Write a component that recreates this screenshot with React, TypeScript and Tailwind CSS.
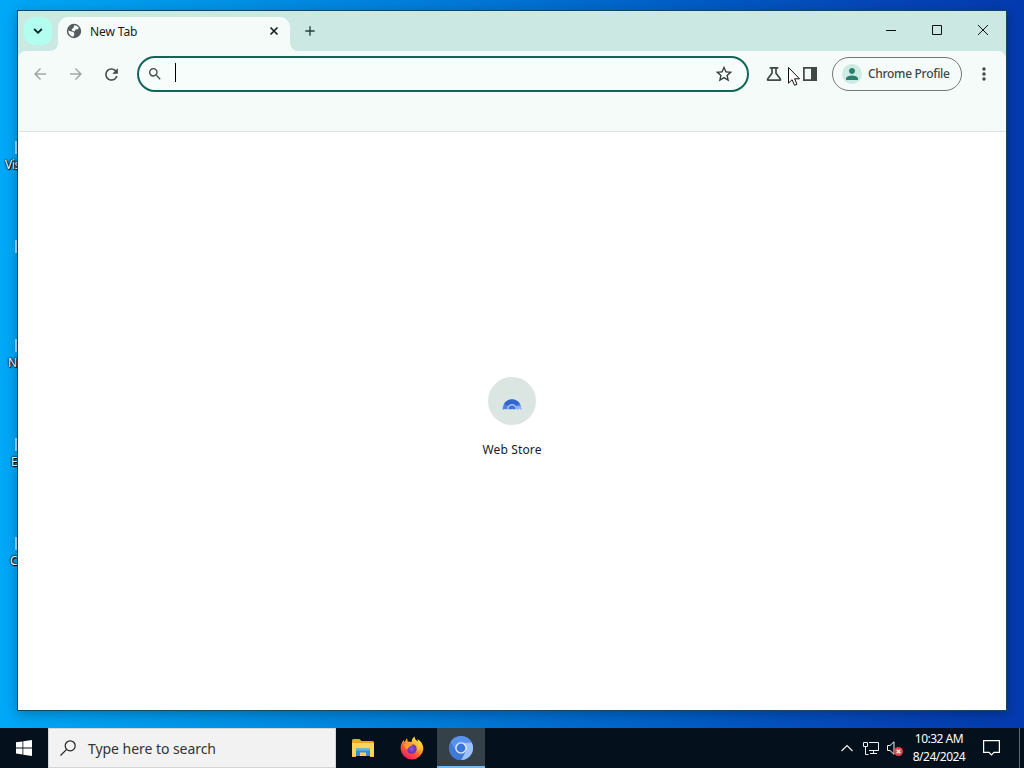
import React from 'react';
import {
  MdAdd,
  MdArrowBack,
  MdArrowForward,
  MdMoreVert,
  MdPerson,
  MdRefresh,
  MdSearch,
  MdStarBorder,
} from 'react-icons/md';

const shortcuts = [
  { name: 'Vis', indent: 'pl-[5px]' },
  { name: '', indent: 'pl-[5px]' },
  { name: 'N', indent: 'pl-[8px]' },
  { name: 'E', indent: 'pl-[11px]' },
  { name: 'C', indent: 'pl-[10px]' },
];

function DesktopShortcuts() {
  return (
    <div className="flex w-[24px] flex-col pt-[141px]">
      {shortcuts.map((s, i) => (
        <div key={i} className="flex h-[99px] shrink-0 flex-col">
          <div className="ml-[15px] h-[13px] w-[3px] bg-[#a9d5ea]" />
          <div
            className={`${s.indent} pt-[3px] text-[12px] leading-4 tracking-[-0.4px] text-white [text-shadow:1px_1px_1px_#000,0_0_2px_#000,0_0_2px_#000]`}
          >
            {s.name}
          </div>
        </div>
      ))}
    </div>
  );
}

function GlobeIcon() {
  return (
    <svg className="-mt-[6px] h-4 w-4" viewBox="0 0 16 16">
      <circle cx="8" cy="8" r="7.2" fill="#575d5f" />
      <path d="M8.300 2.300c1.900.1 3.500 1 4.500 2.400l-1 1.600-2.300.3-1 1.800-2.300-.6-.6-1.500 1.800-1.200Z" fill="#f4fbf9" />
      <path d="M2.300 7.400l3 1.200 2.200.5.900 1.600-.7 2.900C4.600 13.400 2.300 10.900 2.300 7.400Z" fill="#f4fbf9" />
    </svg>
  );
}

function TabStrip() {
  return (
    <div className="flex h-10 shrink-0 bg-[#cce8e2]">
      <div className="flex w-10 items-center pl-[6px]">
        <div className="flex h-7 w-7 items-center justify-center rounded-[10px] bg-[#b2fff0]">
          <svg className="h-[10px] w-[10px]" viewBox="0 0 10 10" fill="none" stroke="#06201b" strokeWidth="1.8">
            <path d="M1.200 3L5 6.800 8.800 3" />
          </svg>
        </div>
      </div>
      <div className="relative mt-[6px] flex h-[34px] w-[232px] items-center rounded-t-[10px] bg-[#f4fbf9] pr-[11px] pl-2">
        <svg className="absolute bottom-0 -left-2 h-2 w-2" viewBox="0 0 8 8">
          <path d="M8 0A8 8 0 0 1 0 8H8Z" fill="#f4fbf9" />
        </svg>
        <svg className="absolute -right-2 bottom-0 h-2 w-2" viewBox="0 0 8 8">
          <path d="M0 0A8 8 0 0 0 8 8H0Z" fill="#f4fbf9" />
        </svg>
        <GlobeIcon />
        <span className="-mt-[5px] ml-2 flex-1 text-[12px] tracking-[-0.1px] text-[#171d1b]">New Tab</span>
        <svg className="-mt-[6px] h-[10px] w-[10px]" viewBox="0 0 10 10" fill="none" stroke="#18211e" strokeWidth="1.700">
          <path d="M1.500 1.500l7 7M8.500 1.500l-7 7" />
        </svg>
      </div>
      <div className="flex flex-1 items-center pl-[12px]">
        <MdAdd className="h-4 w-4 text-[#23403a]" />
      </div>
      <svg className="h-10 w-[138px]" viewBox="0 0 138 40" fill="none" stroke="#111">
        <path d="M18 19.5h10" />
        <path d="M64.5 14.5h9v9h-9z" />
        <path d="M110 14l10 10M120 14l-10 10" />
      </svg>
    </div>
  );
}

function FlaskIcon() {
  return (
    <svg className="h-[18px] w-[18px]" viewBox="0 0 18 18" fill="none" stroke="#3f4946" strokeWidth="1.7">
      <path d="M4.7 2.8h8.6M7 3v5.2L2.8 13.8c-.5.8-.2 1.4.7 1.4h11c.9 0 1.2-.6.7-1.4L11 8.2V3" />
    </svg>
  );
}

function SidePanelIcon() {
  return (
    <svg className="h-4 w-4" viewBox="0 0 16 16">
      <path d="M1.900 1.900h12.200v12.200H1.900z" fill="none" stroke="#3f4946" strokeWidth="1.700" />
      <path d="M9 1.100h5.900v13.800H9z" fill="#3f4946" />
    </svg>
  );
}

function Toolbar() {
  return (
    <div className="h-[81px] shrink-0 bg-[#cce8e2]">
      <div className="h-full rounded-t-lg border-b border-[#dde4e2] bg-[#f4fbf9] pt-[5px]">
        <div className="flex h-9 items-center">
          <div className="flex w-[119px] items-center gap-[18px] pl-[13px]">
            <MdArrowBack className="h-[18px] w-[18px] text-[#a1a8a6]" />
            <MdArrowForward className="h-[18px] w-[18px] text-[#a1a8a6]" />
            <MdRefresh className="h-[19px] w-[19px] -ml-px text-[#3f4946]" />
          </div>
          <div className="flex h-9 w-[612px] items-center rounded-full border-2 border-[#136558] bg-[#f6fdfb] pr-[13px] pl-[8px]">
            <MdSearch className="h-4 w-4 text-[#3f4946]" />
            <div className="-mt-[3px] ml-3 h-[19px] w-px bg-black" />
            <div className="flex-1" />
            <MdStarBorder className="h-5 w-5 text-[#333d3a]" />
          </div>
          <div className="flex w-[83px] items-center gap-[19px] pl-4">
            <FlaskIcon />
            <SidePanelIcon />
          </div>
          <div className="flex h-[34px] w-[130px] items-center rounded-full border border-[#6f7977] pl-[9px]">
            <div className="flex h-5 w-5 items-center justify-center rounded-full bg-[#cdeae3]">
              <MdPerson className="h-[18px] w-[18px] text-[#29806c]" />
            </div>
            <span className="ml-[6px] text-[12px] font-medium tracking-[-0.3px] whitespace-nowrap text-[#3f4946]">Chrome Profile</span>
          </div>
          <MdMoreVert className="ml-[12px] h-5 w-5 text-[#3f4946]" />
        </div>
      </div>
    </div>
  );
}

function WebStoreIcon() {
  return (
    <svg className="h-5 w-5" viewBox="0 0 20 20">
      <path d="M.6 15a9.4 9.4 0 0 1 18.8 0Z" transform="translate(0 -1)" fill="#4f7fdf" />
      <path d="M2.200 8.500A9.400 9.400 0 0 1 17.800 8.500L13 11H6Z" fill="#3266cc" />
      <path d="M5 14a5 5 0 0 1 10 0Z" fill="#a9c3f6" />
      <path d="M6.500 14a3.500 3.500 0 0 1 7 0Z" fill="#3f75d8" />
      <path d="M14.300 11h4.300l.8 3h-4.500Z" fill="#8db4f7" />
      <path d="M.6 14.500h18.800" stroke="#a9c1ed" strokeDasharray="2 1.500" />
    </svg>
  );
}

function BrowserWindow() {
  return (
    <div className="absolute top-[10px] left-[17px] flex h-[701px] w-[990px] flex-col border border-[#12495f] bg-white shadow-[0_3px_12px_rgba(0,0,0,0.28)]">
      <TabStrip />
      <Toolbar />
      <div className="flex flex-1 flex-col items-center pt-[245px]">
        <div className="flex h-12 w-12 items-center justify-center rounded-full bg-[#dbe5e2] pt-[8px]">
          <WebStoreIcon />
        </div>
        <span className="mt-[17px] text-[12px] leading-4 tracking-[0.15px] text-[#171d1b]">Web Store</span>
      </div>
    </div>
  );
}

function FolderIcon() {
  return (
    <svg className="h-5 w-[22px]" viewBox="0 0 22 20">
      <path d="M0 2.5Q0 1 1.5 1h6l2 2H20.5Q22 3 22 4.5V17H0Z" fill="#e9a81e" />
      <path d="M0 5h22v13H0Z" fill="#fbd45d" />
      <path d="M4 10.5h14V18h-4v-3.5H8V18H4Z" fill="#3b8dce" />
      <path d="M4 10.5h14v2H4Z" fill="#65b4e6" />
      <path d="M0 18h4v1H0zM18 18h4v1h-4z" fill="#e9b839" />
    </svg>
  );
}

function FirefoxIcon() {
  return (
    <svg className="h-6 w-6" viewBox="0 0 24 24">
      <defs>
        <linearGradient id="fox" x1=".85" y1=".05" x2=".25" y2=".95">
          <stop offset="0" stopColor="#fff44f" />
          <stop offset=".35" stopColor="#ffb22c" />
          <stop offset=".65" stopColor="#ff5b36" />
          <stop offset="1" stopColor="#e81d63" />
        </linearGradient>
        <radialGradient id="globe">
          <stop offset="0" stopColor="#9a50e8" />
          <stop offset="1" stopColor="#5935a9" />
        </radialGradient>
      </defs>
      <path
        d="M15 .5c-1 2 1.1 3.4 2.6 5 .3-.9.1-1.6-.2-2.4 3.8 2.2 6 6 5.9 10.1A11.4 11.4 0 0 1 .6 13C.4 9.4 1.8 6.1 3.7 4l.8 2.3L7 2l.7 3.6 4 .5C11.6 3.700 12.600 1.600 15 .5Z"
        fill="url(#fox)"
      />
      <circle cx="11.8" cy="13" r="4.8" fill="url(#globe)" />
      <path d="M4.300 8c2-1.600 4.600-1.300 6.500.1l2 .4c-.3 1.500-2.500 1.600-3.300 2.100-.5 1.500-1.900 1.700-2.200 3.100C5 13 4 10.300 4.300 8Z" fill="#ff9b2d" />
      <path d="M15 6c3 1.700 4 5.600 2 9 2.500-1.300 3.500-4 2.800-6.800Z" fill="#ffcc38" />
    </svg>
  );
}

function ChromiumIcon() {
  return (
    <svg className="h-6 w-6" viewBox="0 0 24 24">
      <circle cx="12" cy="12" r="12" fill="#4a83e0" />
      <path d="M12 6.500h10.700A12 12 0 0 1 12 24l5-9.200Z" fill="#9dc1fb" />
      <path d="M1.700 5.900A12 12 0 0 0 12 24l5-9.200-9.800 0Z" fill="#4179d8" />
      <path d="M1.700 5.900A12 12 0 0 1 22.700 6.500H12L7.200 14.800Z" fill="#5b92ec" />
      <circle cx="12" cy="12" r="5.800" fill="#e2ecff" />
      <circle cx="12" cy="12" r="4.400" fill="#3b74da" />
    </svg>
  );
}

function TrayIcons() {
  return (
    <svg className="h-10 w-[70px]" viewBox="0 0 70 40" fill="none" stroke="#eef2f4">
      <path d="M1.500 23l5.500-5.500 5.500 5.500" strokeWidth="1.200" />
      <path d="M29 14.500h9.500v8H29M33.500 22.500v3M30 25.500h7" />
      <path d="M23.500 14.500h4v4h-4zM25.500 18.500v8h3" />
      <path d="M47.500 17.500h2.500l4-3.700v12.500l-4-3.800h-2.500z" />
      <circle cx="58.500" cy="23.500" r="4.500" fill="#e2444b" stroke="none" />
      <path d="M56.700 21.700l3.600 3.600M60.300 21.700l-3.600 3.600" strokeWidth="1.300" />
    </svg>
  );
}

function Taskbar() {
  return (
    <div className="absolute bottom-0 left-0 flex h-10 w-[1024px] bg-[#04101b]">
      <div className="flex w-12 items-center justify-center">
        <svg className="h-4 w-4" viewBox="0 0 16 16" fill="#fff">
          <path d="M0 2.300l6.500-.9v6.100H0zM7.300 1.300L16 0v7.500H7.300zM0 8.400h6.500v6.100L0 13.600zM7.300 8.400H16V16l-8.700-1.300z" />
        </svg>
      </div>
      <div className="flex w-72 items-center border border-[#d3d5d6] bg-[#f2f2f2] pl-[11px]">
        <svg className="h-4 w-4" viewBox="0 0 16 16" fill="none" stroke="#222" strokeWidth="1.200">
          <circle cx="10.200" cy="5.800" r="5" />
          <path d="M6.700 9.300L.5 15.500" />
        </svg>
        <span className="ml-3 text-[14px] tracking-[-0.05px] whitespace-nowrap text-[#333]">Type here to search</span>
      </div>
      <div className="flex w-[52px] items-center justify-center pl-[2px]"><FolderIcon /></div>
      <div className="flex w-[49px] items-center justify-center pr-[2px]"><FirefoxIcon /></div>
      <div className="flex w-12 items-center justify-center border-b-2 border-[#76b9ed] bg-[#354149] pt-[2px]"><ChromiumIcon /></div>
      <div className="flex flex-1 justify-end"><TrayIcons /></div>
      <div className="flex w-[69px] flex-col items-center pt-[2px] pr-[11px] text-[12px] leading-[18px] tracking-[-0.5px] whitespace-nowrap text-white">
        <span>10:32 AM</span>
        <span>8/24/2024</span>
      </div>
      <div className="flex w-[41px] justify-center border-r border-[#5b6872] pt-3">
        <svg className="-ml-[16px] h-4 w-[17px]" viewBox="0 0 17 16" fill="none" stroke="#fff" strokeWidth="1.200">
          <path d="M.6.600h15.800v11.800h-5.400l-2.500 2.600L6 12.400H.600z" />
        </svg>
      </div>
      <div className="w-1" />
    </div>
  );
}

export default function App() {
  return (
    <div className="relative h-[768px] w-[1024px] overflow-hidden bg-[linear-gradient(90deg,#00a8f8_0%,#0095e8_20%,#007fdb_40%,#0060c8_65%,#0646b8_85%,#043aaf_100%)] font-['Noto_Sans','Open_Sans',sans-serif]">
      <DesktopShortcuts />
      <BrowserWindow />
      <Taskbar />
      <svg className="absolute top-[66px] left-[787px] h-[22px] w-[14px]" viewBox="0 0 14 22">
        <path d="M1.500 1.500v15.700l3.600-3.500 2.400 5.600 2.500-1.100-2.400-5.400h4.900Z" fill="#fff" stroke="#111" />
      </svg>
    </div>
  );
}
